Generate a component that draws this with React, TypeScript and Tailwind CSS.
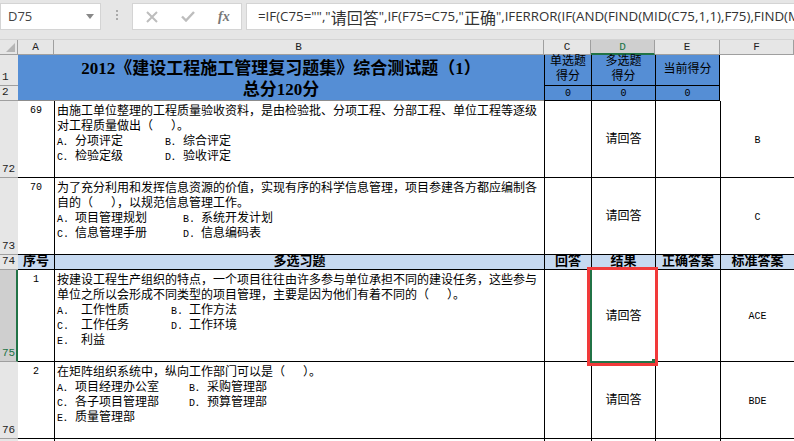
import React from "react";

const sim = "font-['Liberation_Mono','Noto_Sans_CJK_SC',monospace]";

const Opt = ({ label, text, w = 0, labelW = 18 }: { label: string; text: string; w?: number; labelW?: number }) => (
  <span className="inline-flex" style={w ? { width: w } : undefined}>
    <span className="text-[10px] leading-[15px] shrink-0" style={{ width: labelW }}>{label}</span>
    <span>{text}</span>
  </span>
);

const RowHead = ({ n, active }: { n: number; active?: boolean }) => (
  <div
    className={
      active
        ? "bg-[#cfcfcf] border-r-2 border-r-[#217346] border-b border-b-[#9f9f9f] flex items-end pl-0.5 text-[11px] leading-[15px] text-[#217346]"
        : "bg-[#e6e6e6] border-b border-b-[#9f9f9f] flex items-end pl-0.5 text-[11px] leading-[15px] text-[#222]"
    }
  >
    {n}
  </div>
);

const ColHead = ({ c, active }: { c: string; active?: boolean }) => (
  <div
    className={
      active
        ? "bg-[#cfcfcf] border-b-2 border-b-[#217346] border-r border-r-[#9f9f9f] flex justify-center text-[11px] leading-[14px] text-[#217346]"
        : "bg-[#e6e6e6] border-b border-b-[#9f9f9f] border-r border-r-[#9f9f9f] flex justify-center text-[11px] leading-[14px] text-[#222]"
    }
  >
    {c}
  </div>
);

const Num = ({ n }: { n: number }) => (
  <div className="border-b border-black text-center text-[10px] leading-[15px] pt-0.5 text-black">{n}</div>
);

const Question = ({ children }: { children: React.ReactNode }) => (
  <div className="border-l border-b border-black pl-0.5 pt-1 text-[12px] leading-[15px] text-black">{children}</div>
);

const Cell = () => <div className="border-l border-b border-black" />;

const Result = () => (
  <div className="border-l border-b border-black flex items-center justify-center pt-0.5 text-[12px] text-black">请回答</div>
);

const Answer = ({ a }: { a: string }) => (
  <div className="border-l border-b border-black flex items-center justify-center pt-0.5 text-[10px] text-black">{a}</div>
);

const Sub = ({ t }: { t: string }) => (
  <div className="bg-[#c6d9f0] border-l border-b border-black flex items-center justify-center text-[13px] font-bold leading-[14px] text-black">
    {t}
  </div>
);

const App = () => {
  return (
    <div className={`w-[794px] h-[441px] overflow-hidden bg-white ${sim}`}>
      <div className="h-[40px] bg-[#e6e6e6] flex items-start pt-[3px] border-b border-[#d4d4d4]">
        <div className="w-[101px] h-[27px] bg-white border border-[#d4d4d4] flex items-center justify-between pl-[7px] pr-[6px] font-['Open_Sans',sans-serif] text-[13px] text-[#444]">
          D75
          <span className="w-0 h-0 border-x-[4px] border-x-transparent border-t-[5px] border-t-[#888]" />
        </div>
        <div className="w-[31px] flex flex-col items-center gap-[2px] pt-[7px]">
          <span className="w-[2px] h-[2px] bg-[#aaa]" />
          <span className="w-[2px] h-[2px] bg-[#aaa]" />
          <span className="w-[2px] h-[2px] bg-[#aaa]" />
        </div>
        <div className="w-[110px] h-[27px] bg-white border border-[#d4d4d4] flex items-center pl-[13px] gap-[23px]">
          <svg width="12" height="12" viewBox="0 0 12 12" fill="none" stroke="#bdbdbd" strokeWidth="2">
            <path d="M1 1l10 10M11 1L1 11" />
          </svg>
          <svg width="14" height="11" viewBox="0 0 14 11" fill="none" stroke="#bdbdbd" strokeWidth="2.4">
            <path d="M1 5.5l4 4L13 1" />
          </svg>
          <span className="font-['Liberation_Serif',serif] italic font-bold text-[14px] leading-none text-[#777]">fx</span>
        </div>
        <div className="w-[4px]" />
        <div className="flex-1 h-[27px] bg-white border-y border-l border-[#d4d4d4] flex items-center pl-[11px] font-['Open_Sans','Noto_Sans_CJK_SC',sans-serif] text-[13.3px] whitespace-pre overflow-hidden text-[#333]">
          {'=IF(C75="","'}<span className="text-[16px] font-['Noto_Sans_CJK_SC']">请回答</span>{'",IF(F75=C75,"'}
          <span className="text-[16px] font-['Noto_Sans_CJK_SC']">正确</span>{'",IFERROR(IF(AND(FIND(MID(C75,1,1),F75),FIND(M'}
        </div>
      </div>

      <div className="grid grid-cols-[18px_36px_490px_47px_64px_65px_74px] grid-rows-[15px_31px_15px_77px_77px_15px_92px_77px_2px] relative">
        <div className="bg-[#e6e6e6] border-b border-r border-[#9f9f9f] relative">
          <span className="absolute right-[2px] bottom-[2px] w-0 h-0 border-l-[9px] border-l-transparent border-b-[9px] border-b-[#b5b5b5]" />
        </div>
        <ColHead c="A" />
        <ColHead c="B" />
        <ColHead c="C" />
        <ColHead c="D" active />
        <ColHead c="E" />
        <ColHead c="F" />

        <RowHead n={1} />
        <div className="col-span-2 row-span-2 bg-[#558ed5] border-b border-[#8c8c8c] flex flex-col items-center pt-[3px] font-bold text-[17px] leading-[21px] text-black font-['Liberation_Serif','Noto_Sans_CJK_SC',serif]">
          <span>2012《建设工程施工管理复习题集》综合测试题（1）</span>
          <span>总分120分</span>
        </div>
        <div className="bg-[#558ed5] border-l border-b border-black flex items-center justify-center text-center text-[12px] leading-[15px] text-black">
          单选题
          <br />
          得分
        </div>
        <div className="bg-[#558ed5] border-l border-b border-black flex items-center justify-center text-center text-[12px] leading-[15px] text-black">
          多选题
          <br />
          得分
        </div>
        <div className="bg-[#558ed5] border-x border-b border-black flex items-center justify-center text-[12px] text-black">当前得分</div>
        <div />

        <RowHead n={2} />
        <div className="bg-[#558ed5] border-l border-b border-black flex items-center justify-center text-[10px] text-black">0</div>
        <div className="bg-[#558ed5] border-l border-b border-black flex items-center justify-center text-[10px] text-black">0</div>
        <div className="bg-[#558ed5] border-x border-b border-black flex items-center justify-center text-[10px] text-black">0</div>
        <div />

        <RowHead n={72} />
        <Num n={69} />
        <Question>
          <div>由施工单位整理的工程质量验收资料，是由检验批、分项工程、分部工程、单位工程等逐级</div>
          <div>对工程质量做出（&emsp;&ensp;）。</div>
          <div className="flex"><Opt label="A．" text="分项评定" w={108} /><Opt label="B．" text="综合评定" /></div>
          <div className="flex"><Opt label="C．" text="检验定级" w={108} /><Opt label="D．" text="验收评定" /></div>
        </Question>
        <Cell />
        <Result />
        <Cell />
        <Answer a="B" />

        <RowHead n={73} />
        <Num n={70} />
        <Question>
          <div>为了充分利用和发挥信息资源的价值，实现有序的科学信息管理，项目参建各方都应编制各</div>
          <div>自的（&emsp;&ensp;），以规范信息管理工作。</div>
          <div className="flex"><Opt label="A." text="项目管理规划" w={126} /><Opt label="B." text="系统开发计划" /></div>
          <div className="flex"><Opt label="C." text="信息管理手册" w={126} /><Opt label="D." text="信息编码表" /></div>
        </Question>
        <Cell />
        <Result />
        <Cell />
        <Answer a="C" />

        <RowHead n={74} />
        <div className="bg-[#c6d9f0] border-b border-black flex items-center justify-center text-[13px] font-bold leading-[14px] text-black">序号</div>
        <Sub t="多选习题" />
        <Sub t="回答" />
        <Sub t="结果" />
        <Sub t="正确答案" />
        <Sub t="标准答案" />

        <RowHead n={75} active />
        <Num n={1} />
        <Question>
          <div>按建设工程生产组织的特点，一个项目往往由许多参与单位承担不同的建设任务，这些参与</div>
          <div>单位之所以会形成不同类型的项目管理，主要是因为他们有着不同的（&emsp;&ensp;）。</div>
          <div className="flex"><Opt label="A." text="工作性质" w={114} labelW={24} /><Opt label="B." text="工作方法" /></div>
          <div className="flex"><Opt label="C." text="工作任务" w={114} labelW={24} /><Opt label="D." text="工作环境" /></div>
          <div className="flex"><Opt label="E." text="利益" labelW={24} /></div>
        </Question>
        <Cell />
        <Result />
        <Cell />
        <Answer a="ACE" />

        <RowHead n={76} />
        <Num n={2} />
        <Question>
          <div>在矩阵组织系统中，纵向工作部门可以是（&emsp;&ensp;）。</div>
          <div className="flex"><Opt label="A．" text="项目经理办公室" w={132} /><Opt label="B．" text="采购管理部" /></div>
          <div className="flex"><Opt label="C．" text="各子项目管理部" w={132} /><Opt label="D．" text="预算管理部" /></div>
          <div className="flex"><Opt label="E．" text="质量管理部" /></div>
        </Question>
        <Cell />
        <Result />
        <Cell />
        <Answer a="BDE" />

        <div className="bg-[#e6e6e6]" />
        <div />
        <div className="border-l border-black" />
        <div className="border-l border-black" />
        <div className="border-l border-black" />
        <div className="border-l border-black" />
        <div className="border-l border-black" />

        {/* active cell, with the red annotation box around it */}
        <div className="absolute left-[587px] top-[227px] w-[71px] h-[99px] border-[3px] border-[#f13a3a]">
          <div className="absolute inset-0 border-l-[2px] border-b-[2px] border-[#217346]" />
          <div className="absolute right-0 bottom-0 w-[3px] h-[4px] bg-[#217346]" />
        </div>
      </div>
    </div>
  );
};

export default App;
